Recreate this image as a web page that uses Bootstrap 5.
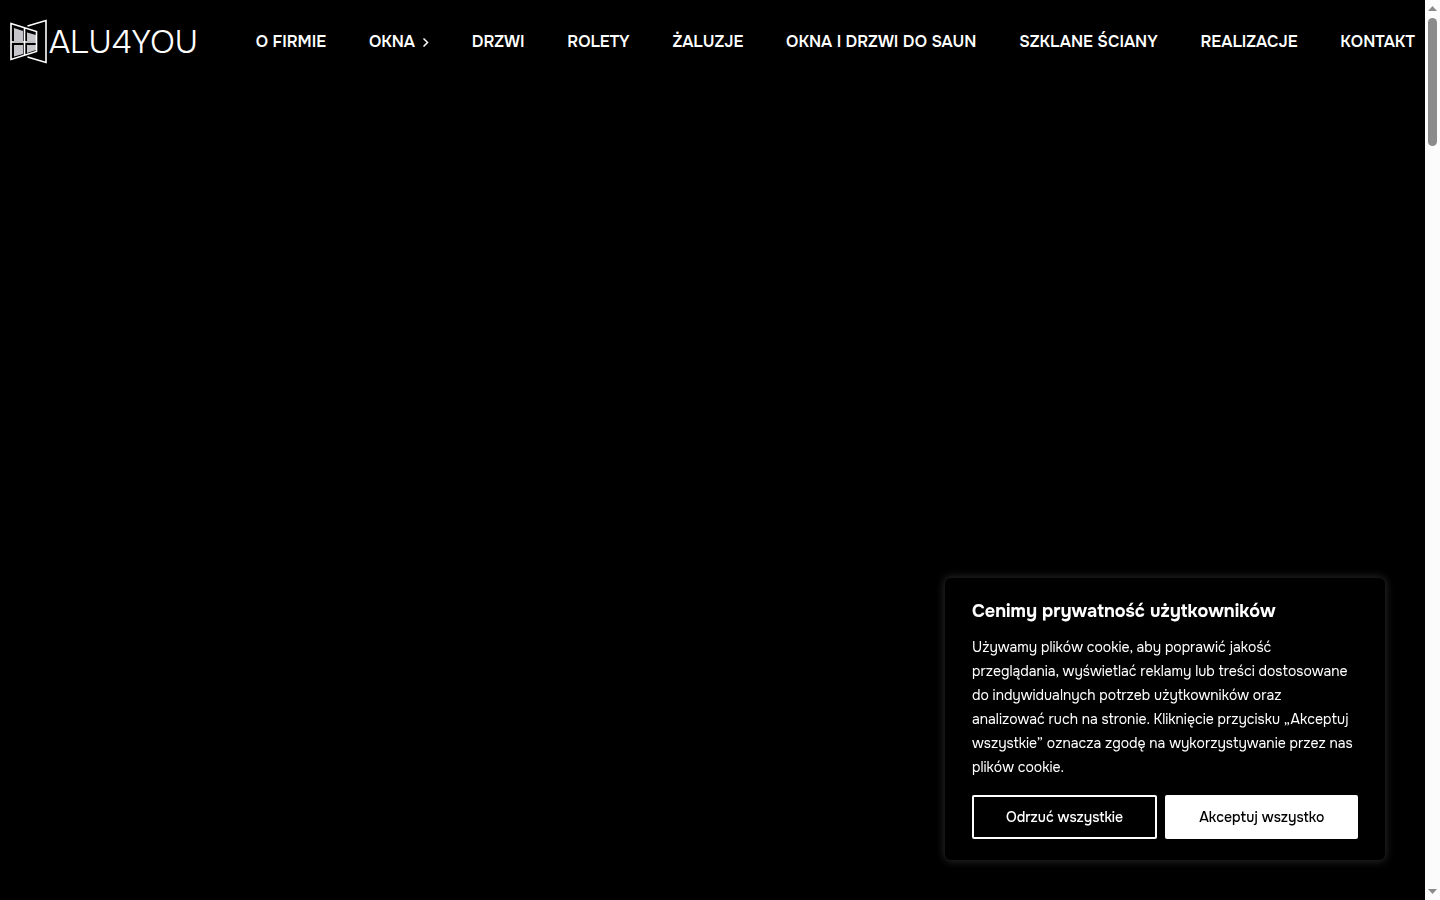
<!DOCTYPE html>
<html lang="pl">
<head>
<meta charset="utf-8">
<meta name="viewport" content="width=device-width, initial-scale=1">
<title>ALU4YOU</title>
<link href="https://cdn.jsdelivr.net/npm/bootstrap@5.3.0/dist/css/bootstrap.min.css" rel="stylesheet">
<style>
  body { background: #000; color: #fff; font-family: Onest, Roboto, "Liberation Sans", sans-serif; }
  .site-header { padding: 19px 10px; gap: 58px; }
  .brand-logo { color: #fff; gap: 1px; height: 45px; }
  .brand-name { font-size: 32px; line-height: 43px; font-weight: 350; padding-top: 2px; }
  .main-menu a { color: #fff; font-size: 16px; line-height: 24px; font-weight: 600; white-space: nowrap; }
  .scroll-rail { width: 15px; background: #fcfcfc; padding: 6px 3px; }
  .scroll-thumb { width: 9px; height: 128px; margin-top: 7px; border-radius: 5px; background: #8b8b8b; }
  .consent { right: 55px; bottom: 40px; width: 440px; padding: 20px 27px 21px; background: #000; border-radius: 6px; box-shadow: 0 0 8px 1px #2a2a2a; }
  .consent h2 { font-size: 18px; line-height: 26px; font-weight: 700; margin-bottom: 11px; }
  .consent p { font-size: 14px; line-height: 24px; margin-bottom: 16px; }
  .consent .btn { height: 44px; border: 2px solid #fff; border-radius: 2px; font-size: 14px; font-weight: 500; padding: 0 32px; white-space: nowrap; }
  .btn-reject, .btn-reject:hover { color: #fff; background: #000; }
  .btn-accept, .btn-accept:hover { color: #000; background: #fff; }
</style>
</head>
<body>
<div class="d-flex min-vh-100">
  <div class="flex-grow-1">
    <header class="site-header d-flex align-items-center">
      <a class="brand-logo d-flex align-items-center text-decoration-none" href="#">
        <svg width="38" height="45" viewBox="10 19 38 45" fill="none" stroke="#fff" aria-hidden="true">
          <path d="M14 28l9 3v10h-9zM27 32.500l9 2.500v6h-9zM14 45h9v9l-9 2.500zM27 45h9v5l-9 3z" fill="#c5c5ca" stroke="none"/>
          <path d="M11 23.500L36.500 31.500V51.500L11 59.500zM24.500 28V55.500M11 42H36.500" stroke-width="1.600"/>
          <path d="M27.500 26L46 20.500V62.500L27.500 57" stroke-width="1.600"/>
        </svg>
        <span class="brand-name">ALU4YOU</span>
      </a>
      <nav class="flex-grow-1" aria-label="Menu główne">
        <ul class="main-menu list-unstyled d-flex justify-content-between mb-0">
          <li><a class="text-decoration-none" href="#">O FIRMIE</a></li>
          <li><a class="text-decoration-none d-flex align-items-center gap-2" href="#">OKNA
            <svg width="6" height="10" viewBox="0 0 6 10" fill="none" stroke="#fff" stroke-width="1.500" aria-hidden="true"><path d="M.5 1.500L4.500 5.500L.5 9.500"/></svg></a></li>
          <li><a class="text-decoration-none" href="#">DRZWI</a></li>
          <li><a class="text-decoration-none" href="#">ROLETY</a></li>
          <li><a class="text-decoration-none" href="#">ŻALUZJE</a></li>
          <li><a class="text-decoration-none" href="#">OKNA I DRZWI DO SAUN</a></li>
          <li><a class="text-decoration-none" href="#">SZKLANE ŚCIANY</a></li>
          <li><a class="text-decoration-none" href="#">REALIZACJE</a></li>
          <li><a class="text-decoration-none" href="#">KONTAKT</a></li>
        </ul>
      </nav>
    </header>
  </div>
  <div class="scroll-rail d-flex flex-column align-items-center flex-shrink-0 vh-100 sticky-top" aria-hidden="true">
    <svg class="flex-shrink-0" width="9" height="5" viewBox="0 0 9 5"><path d="M0 5L4.500 0L9 5z" fill="#8b8b8b"/></svg>
    <div class="scroll-thumb"></div>
    <svg class="flex-shrink-0 mt-auto" width="9" height="5" viewBox="0 0 9 5"><path d="M0 0L4.500 5L9 0z" fill="#8b8b8b"/></svg>
  </div>
</div>
<section class="consent position-fixed" role="dialog" aria-labelledby="consent-title">
  <h2 id="consent-title">Cenimy prywatność użytkowników</h2>
  <p>Używamy plików cookie, aby poprawić jakość przeglądania, wyświetlać reklamy lub treści dostosowane do indywidualnych potrzeb użytkowników oraz analizować ruch na stronie. Kliknięcie przycisku „Akceptuj wszystkie” oznacza zgodę na wykorzystywanie przez nas plików cookie.</p>
  <div class="d-flex gap-2">
    <button type="button" class="btn btn-reject flex-grow-1">Odrzuć wszystkie</button>
    <button type="button" class="btn btn-accept flex-grow-1">Akceptuj wszystko</button>
  </div>
</section>
<script src="https://cdn.jsdelivr.net/npm/bootstrap@5.3.0/dist/js/bootstrap.bundle.min.js"></script>
</body>
</html>
